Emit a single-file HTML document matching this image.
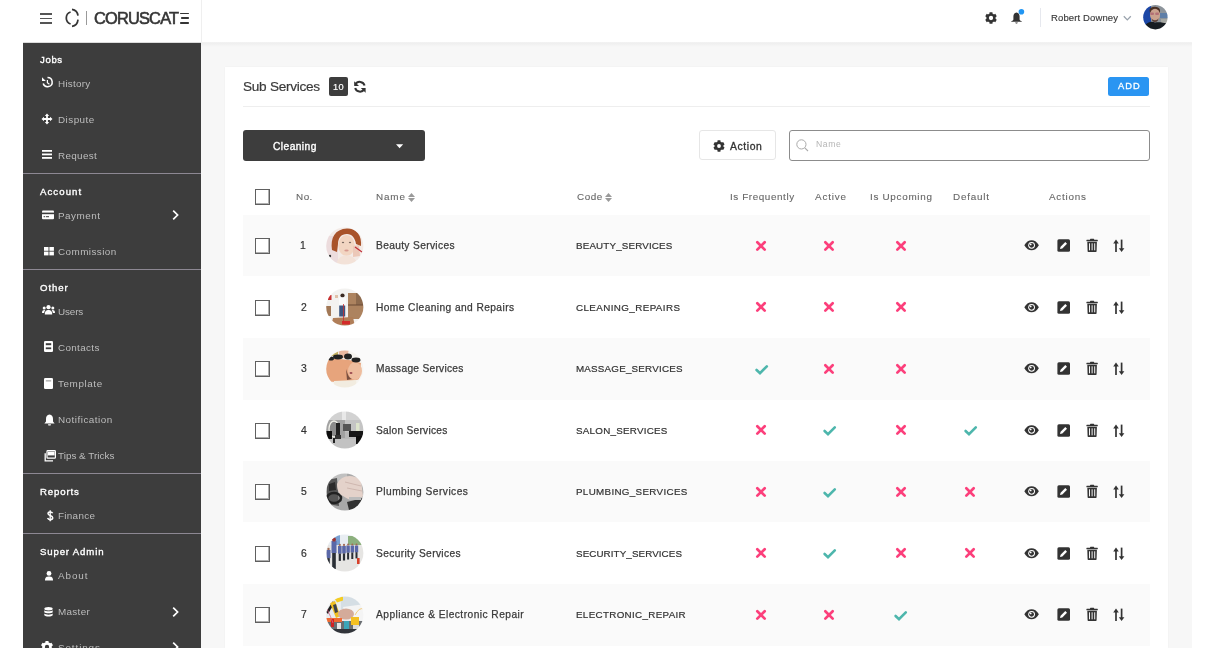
<!DOCTYPE html>
<html><head><meta charset="utf-8"><title>Sub Services</title>
<style>
html,body{margin:0;padding:0;}
body{width:1220px;height:648px;overflow:hidden;position:relative;background:#fff;font-family:"Liberation Sans",sans-serif;}
.t{position:absolute;white-space:nowrap;will-change:transform;}
svg{display:block;overflow:visible}
</style></head><body>
<div style="position:absolute;left:0px;top:0px;width:1220px;height:43px;background:#fff"></div>
<div style="position:absolute;left:201px;top:0px;width:1px;height:43px;background:#efefef"></div>
<div style="position:absolute;left:39.6px;top:13px;width:12.6px;height:1.5px;background:#555"></div>
<div style="position:absolute;left:39.6px;top:17.6px;width:12.6px;height:1.5px;background:#555"></div>
<div style="position:absolute;left:39.6px;top:22.2px;width:12.6px;height:1.5px;background:#555"></div>
<svg style="position:absolute;left:60px;top:4px" width="24" height="26" viewBox="0 0 24 26"><g fill="none" stroke="#353535" stroke-width="1.75"><path d="M10.6 8 C7.4 9 6.3 11.6 6.3 14 C6.3 16.4 7.4 19 10.6 20"/><path d="M12 5.3 C15.3 5.9 17.6 8 18 11.6"/><path d="M18 15.7 C17.6 19.5 15.3 22 12 22.4"/></g></svg>
<div style="position:absolute;left:86px;top:11.2px;width:1px;height:13.5px;background:#9a9a9a"></div>
<div class="t" style="left:93.80px;top:10.42px;font-size:16.4px;line-height:16.4px;letter-spacing:-0.814px;color:#353535;-webkit-text-stroke:0.6px #353535;">CORUSCAT</div>
<div style="position:absolute;left:180.4px;top:12.6px;width:8.3px;height:1.7px;background:#353535;border-radius:0.8px"></div>
<div style="position:absolute;left:180.6px;top:17.2px;width:8.0px;height:1.7px;background:#353535;border-radius:0.8px"></div>
<div style="position:absolute;left:180.4px;top:21.9px;width:8.3px;height:1.7px;background:#353535;border-radius:0.8px"></div>
<svg style="position:absolute;left:983px;top:10px" width="16" height="16" viewBox="0 0 16 16"><g transform="translate(8 8) scale(1.03)"><path fill="#333" fill-rule="evenodd" d="M-1.54 -4.23L-1.40 -5.63L1.40 -5.63L1.54 -4.23A4.5 4.5 0 0 1 2.89 -3.45L4.17 -4.03L5.58 -1.60L4.43 -0.78A4.5 4.5 0 0 1 4.43 0.78L5.58 1.60L4.17 4.03L2.89 3.45A4.5 4.5 0 0 1 1.54 4.23L1.40 5.63L-1.40 5.63L-1.54 4.23A4.5 4.5 0 0 1 -2.89 3.45L-4.17 4.03L-5.58 1.60L-4.43 0.78A4.5 4.5 0 0 1 -4.43 -0.78L-5.58 -1.60L-4.17 -4.03L-2.89 -3.45A4.5 4.5 0 0 1 -1.54 -4.23Z M2.1 0 A2.1 2.1 0 1 0 -2.1 0 A2.1 2.1 0 1 0 2.1 0Z"/></g></svg>
<svg style="position:absolute;left:1010px;top:8px" width="16" height="18" viewBox="0 0 16 18"><path fill="#333" d="M6.5 4.6 C4.4 4.8 3.4 6.6 3.4 8.6 L3.4 11.4 C3.4 12.2 2.4 12.6 1.2 13.2 L1.2 13.8 L11.8 13.8 L11.8 13.2 C10.6 12.6 9.6 12.2 9.6 11.4 L9.6 8.6 C9.6 6.6 8.6 4.8 6.5 4.6Z"/><path d="M5.2 14.4 L7.8 14.4 C7.6 15.2 7.1 15.4 6.5 15.4 C5.9 15.4 5.4 15.2 5.2 14.4Z" fill="#333"/><circle cx="11.4" cy="3.7" r="2.8" fill="#2196f3"/></svg>
<div style="position:absolute;left:1040px;top:8px;width:1px;height:19px;background:#e6e8ee"></div>
<div class="t" style="left:1051.40px;top:13.26px;font-size:9.5px;line-height:9.5px;letter-spacing:0.125px;color:#3a3a3a;-webkit-text-stroke:0.15px #3a3a3a;">Robert Downey</div>
<svg style="position:absolute;left:1123px;top:15px" width="9" height="7" viewBox="0 0 9 7"><path d="M0.8 1.2 L4.3 4.9 L7.8 1.2" fill="none" stroke="#9aa3ad" stroke-width="1.3"/></svg>
<svg style="position:absolute;left:1143px;top:4.8px" width="25" height="25" viewBox="0 0 25 25"><defs><clipPath id="av"><circle cx="12.4" cy="12.2" r="12.2"/></clipPath><filter id="avb"><feGaussianBlur stdDeviation="0.45"/></filter></defs><g clip-path="url(#av)"><g filter="url(#avb)"><rect x="-1" y="-1" width="27" height="27" fill="#8d949b"/><rect x="-1" y="-1" width="9" height="27" fill="#1b47a6"/><rect x="17" y="8" width="8" height="5" fill="#5f7fa8"/><rect x="18" y="14" width="7" height="4" fill="#a7a9a4"/><path d="M6.5 5 C7 1 16 0.5 17 5 L17 8 L7 8Z" fill="#4a3026"/><ellipse cx="12" cy="10" rx="5" ry="6.2" fill="#caa28e"/><rect x="7.2" y="7.6" width="3.8" height="2.4" rx="1.1" fill="#b37076"/><rect x="12.2" y="7.6" width="3.8" height="2.4" rx="1.1" fill="#b37076"/><path d="M8.5 13 C9.5 16 14.5 16 15.5 13 L15 15.5 C13 17.5 11 17.5 9 15.5Z" fill="#5a4038"/><path d="M-1 26 L2 20 C6 16.5 9 16 12 17.5 C15 17 19 17 26 19 L26 26Z" fill="#161b20"/></g></g></svg>
<div style="position:absolute;left:23px;top:42px;width:178px;height:1px;background:#dcdcdc"></div>
<div style="position:absolute;left:23px;top:43px;width:178px;height:605px;background:#3d3d3d"></div>
<div style="position:absolute;left:23px;top:173px;width:178px;height:1px;background:#8d8893"></div>
<div style="position:absolute;left:23px;top:269px;width:178px;height:1px;background:#8d8893"></div>
<div style="position:absolute;left:23px;top:473px;width:178px;height:1px;background:#8d8893"></div>
<div style="position:absolute;left:23px;top:533px;width:178px;height:1px;background:#8d8893"></div>
<div class="t" style="left:40.40px;top:55.17px;font-size:9.6px;line-height:9.6px;letter-spacing:0.633px;color:#ffffff;-webkit-text-stroke:0.35px #fff;">Jobs</div>
<div class="t" style="left:40.40px;top:187.17px;font-size:9.6px;line-height:9.6px;letter-spacing:1.083px;color:#ffffff;-webkit-text-stroke:0.35px #fff;">Account</div>
<div class="t" style="left:40.40px;top:283.17px;font-size:9.6px;line-height:9.6px;letter-spacing:0.950px;color:#ffffff;-webkit-text-stroke:0.35px #fff;">Other</div>
<div class="t" style="left:40.40px;top:487.17px;font-size:9.6px;line-height:9.6px;letter-spacing:0.867px;color:#ffffff;-webkit-text-stroke:0.35px #fff;">Reports</div>
<div class="t" style="left:40.40px;top:547.17px;font-size:9.6px;line-height:9.6px;letter-spacing:0.855px;color:#ffffff;-webkit-text-stroke:0.35px #fff;">Super Admin</div>
<div class="t" style="left:58.40px;top:78.92px;font-size:9.9px;line-height:9.9px;letter-spacing:0.250px;color:#bdbdbd;">History</div>
<div class="t" style="left:58.40px;top:114.92px;font-size:9.9px;line-height:9.9px;letter-spacing:0.458px;color:#bdbdbd;">Dispute</div>
<div class="t" style="left:58.40px;top:150.92px;font-size:9.9px;line-height:9.9px;letter-spacing:0.333px;color:#bdbdbd;">Request</div>
<div class="t" style="left:58.40px;top:210.92px;font-size:9.9px;line-height:9.9px;letter-spacing:0.492px;color:#bdbdbd;">Payment</div>
<div class="t" style="left:58.40px;top:246.92px;font-size:9.9px;line-height:9.9px;letter-spacing:0.439px;color:#bdbdbd;">Commission</div>
<div class="t" style="left:58.40px;top:306.92px;font-size:9.9px;line-height:9.9px;letter-spacing:-0.138px;color:#bdbdbd;">Users</div>
<div class="t" style="left:58.40px;top:342.92px;font-size:9.9px;line-height:9.9px;letter-spacing:0.336px;color:#bdbdbd;">Contacts</div>
<div class="t" style="left:58.40px;top:378.92px;font-size:9.9px;line-height:9.9px;letter-spacing:0.579px;color:#bdbdbd;">Template</div>
<div class="t" style="left:58.40px;top:414.92px;font-size:9.9px;line-height:9.9px;letter-spacing:0.486px;color:#bdbdbd;">Notification</div>
<div class="t" style="left:58.40px;top:450.92px;font-size:9.9px;line-height:9.9px;letter-spacing:0.017px;color:#bdbdbd;">Tips &amp; Tricks</div>
<div class="t" style="left:58.40px;top:510.92px;font-size:9.9px;line-height:9.9px;letter-spacing:0.300px;color:#bdbdbd;">Finance</div>
<div class="t" style="left:58.40px;top:570.92px;font-size:9.9px;line-height:9.9px;letter-spacing:0.912px;color:#bdbdbd;">About</div>
<div class="t" style="left:58.40px;top:606.92px;font-size:9.9px;line-height:9.9px;letter-spacing:0.310px;color:#bdbdbd;">Master</div>
<div class="t" style="left:58.40px;top:642.92px;font-size:9.9px;line-height:9.9px;letter-spacing:0.893px;color:#bdbdbd;">Settings</div>
<svg style="position:absolute;left:171px;top:209px" width="9" height="12" viewBox="0 0 9 12"><path d="M2.2 1.6 L6.6 6 L2.2 10.4" fill="none" stroke="#fff" stroke-width="1.7"/></svg>
<svg style="position:absolute;left:171px;top:605.5px" width="9" height="12" viewBox="0 0 9 12"><path d="M2.2 1.6 L6.6 6 L2.2 10.4" fill="none" stroke="#fff" stroke-width="1.7"/></svg>
<svg style="position:absolute;left:171px;top:641px" width="9" height="12" viewBox="0 0 9 12"><path d="M2.2 1.6 L6.6 6 L2.2 10.4" fill="none" stroke="#fff" stroke-width="1.7"/></svg>
<svg style="position:absolute;left:41px;top:76px" width="12" height="12" viewBox="0 0 12 12"><path d="M6.5 1.5 A4.6 4.6 0 1 1 2.2 7.5" fill="none" stroke="#fff" stroke-width="1.5"/><path d="M1 1.2 L1 5 L4.8 5Z" fill="#fff"/><path d="M6.4 4 L6.4 6.8 L8.4 8.2" fill="none" stroke="#fff" stroke-width="1.2"/></svg>
<svg style="position:absolute;left:41px;top:113px" width="12" height="12" viewBox="0 0 12 12"><path fill="#fff" d="M6 0.5 L8.2 3 L6.9 3 L6.9 5.1 L9 5.1 L9 3.8 L11.5 6 L9 8.2 L9 6.9 L6.9 6.9 L6.9 9 L8.2 9 L6 11.5 L3.8 9 L5.1 9 L5.1 6.9 L3 6.9 L3 8.2 L0.5 6 L3 3.8 L3 5.1 L5.1 5.1 L5.1 3 L3.8 3Z"/></svg>
<svg style="position:absolute;left:42px;top:150px" width="11" height="9" viewBox="0 0 11 9"><rect x="0" y="0" width="10" height="1.8" fill="#fff"/><rect x="0" y="3.5" width="10" height="1.8" fill="#fff"/><rect x="0" y="7" width="10" height="1.8" fill="#fff"/></svg>
<svg style="position:absolute;left:42px;top:210px" width="12" height="10" viewBox="0 0 12 10"><rect x="0" y="0.5" width="12" height="8.8" rx="1" fill="#fff"/><rect x="0" y="2.6" width="12" height="1.6" fill="#3d3d3d"/><rect x="1.6" y="6.2" width="1.6" height="1" fill="#3d3d3d"/><rect x="4" y="6.2" width="3" height="1" fill="#3d3d3d"/></svg>
<svg style="position:absolute;left:43.5px;top:247px" width="11" height="9" viewBox="0 0 11 9"><rect x="0" y="0" width="4.5" height="3.8" fill="#fff"/><rect x="5.4" y="0" width="4.5" height="3.8" fill="#fff"/><rect x="0" y="4.6" width="4.5" height="3.8" fill="#fff"/><rect x="5.4" y="4.6" width="4.5" height="3.8" fill="#fff"/></svg>
<svg style="position:absolute;left:42px;top:305px" width="13" height="10" viewBox="0 0 13 10"><circle cx="6.5" cy="2.2" r="2.1" fill="#fff"/><path d="M2.8 9.5 C2.8 6 4.4 5 6.5 5 C8.6 5 10.2 6 10.2 9.5Z" fill="#fff"/><circle cx="2.2" cy="3" r="1.5" fill="#fff"/><circle cx="10.8" cy="3" r="1.5" fill="#fff"/><path d="M0 8 C0 5.6 1 5 2.5 5 L3.3 5.2 C2.5 6 2.2 7 2.2 8Z" fill="#fff"/><path d="M13 8 C13 5.6 12 5 10.5 5 L9.7 5.2 C10.5 6 10.8 7 10.8 8Z" fill="#fff"/></svg>
<svg style="position:absolute;left:44px;top:341px" width="9" height="11" viewBox="0 0 9 11"><rect x="0" y="0" width="9" height="11" rx="1.3" fill="#fff"/><rect x="1.8" y="2.2" width="5.4" height="2" fill="#3d3d3d"/><rect x="1.8" y="6.4" width="5.4" height="1.8" fill="#3d3d3d"/></svg>
<svg style="position:absolute;left:44px;top:377.5px" width="9" height="11" viewBox="0 0 9 11"><rect x="0" y="0" width="9" height="11" rx="1.3" fill="#fff"/><rect x="1.8" y="2.2" width="5.4" height="1.3" fill="#aaa"/></svg>
<svg style="position:absolute;left:43.5px;top:413.5px" width="11" height="12" viewBox="0 0 11 12"><path fill="#fff" d="M5.5 0.6 C3 0.9 2 2.8 2 5 L2 7.4 L0.4 9.4 L10.6 9.4 L9 7.4 L9 5 C9 2.8 8 0.9 5.5 0.6Z"/><path d="M4 10.2 L7 10.2 L6.6 11.4 L4.4 11.4Z" fill="#fff"/></svg>
<svg style="position:absolute;left:43.5px;top:449.5px" width="12" height="12" viewBox="0 0 12 12"><rect x="3" y="0.6" width="8.4" height="7.6" rx="0.8" fill="none" stroke="#fff" stroke-width="1.2"/><rect x="3.8" y="1.6" width="6.8" height="3.8" fill="#fff"/><path d="M1.2 3.2 L1.2 10.8 L9 10.8" fill="none" stroke="#fff" stroke-width="1.3"/></svg>
<svg style="position:absolute;left:47px;top:510px" width="7" height="12" viewBox="0 0 7 12"><path d="M5.6 3.2 C5.2 2.2 4.4 1.9 3.2 1.9 C1.9 1.9 1 2.5 1 3.6 C1 4.7 1.9 5.1 3.2 5.5 C4.6 5.9 5.7 6.4 5.7 7.8 C5.7 9.1 4.6 9.7 3.2 9.7 C1.9 9.7 1 9.2 0.6 8.1" fill="none" stroke="#fff" stroke-width="1.5"/><path d="M3.2 0.3 V11.3" stroke="#fff" stroke-width="1.3"/></svg>
<svg style="position:absolute;left:44.5px;top:570.5px" width="8" height="10" viewBox="0 0 8 10"><circle cx="4" cy="2.4" r="2.4" fill="#fff"/><path d="M0 9.6 C0 6.2 1.6 5.6 4 5.6 C6.4 5.6 8 6.2 8 9.6Z" fill="#fff"/></svg>
<svg style="position:absolute;left:44px;top:607px" width="9" height="10" viewBox="0 0 9 10"><ellipse cx="4.5" cy="1.8" rx="4.2" ry="1.7" fill="#fff"/><path d="M0.3 3.2 C1.5 4.6 7.5 4.6 8.7 3.2 L8.7 5.2 C7.5 6.6 1.5 6.6 0.3 5.2Z" fill="#fff"/><path d="M0.3 6.6 C1.5 8 7.5 8 8.7 6.6 L8.7 8.2 C7.5 10 1.5 10 0.3 8.2Z" fill="#fff"/></svg>
<svg style="position:absolute;left:39px;top:638.6px" width="16" height="16" viewBox="0 0 16 16"><g transform="translate(8 8) scale(1.07)"><path fill="#fff" fill-rule="evenodd" d="M-1.54 -4.23L-1.40 -5.63L1.40 -5.63L1.54 -4.23A4.5 4.5 0 0 1 2.89 -3.45L4.17 -4.03L5.58 -1.60L4.43 -0.78A4.5 4.5 0 0 1 4.43 0.78L5.58 1.60L4.17 4.03L2.89 3.45A4.5 4.5 0 0 1 1.54 4.23L1.40 5.63L-1.40 5.63L-1.54 4.23A4.5 4.5 0 0 1 -2.89 3.45L-4.17 4.03L-5.58 1.60L-4.43 0.78A4.5 4.5 0 0 1 -4.43 -0.78L-5.58 -1.60L-4.17 -4.03L-2.89 -3.45A4.5 4.5 0 0 1 -1.54 -4.23Z M2 0 A2 2 0 1 0 -2 0 A2 2 0 1 0 2 0Z"/></g></svg>
<div style="position:absolute;left:201px;top:43px;width:991px;height:605px;background:#f7f7f7"></div>
<div style="position:absolute;left:201px;top:42px;width:991px;height:5px;background:linear-gradient(#f3f3f3,#efefef 25%,#f7f7f7)"></div>
<div style="position:absolute;left:225px;top:67px;width:943px;height:581px;background:#fff;box-shadow:0 0 1.5px rgba(0,0,0,0.05)"></div>
<div class="t" style="left:243.10px;top:79.79px;font-size:13.6px;line-height:13.6px;letter-spacing:-0.268px;color:#3a3a3a;-webkit-text-stroke:0.2px #3a3a3a;">Sub Services</div>
<div style="position:absolute;left:329px;top:77px;width:19px;height:19px;background:#3d3d3d;border-radius:2px"></div>
<div class="t" style="left:333.20px;top:82.51px;font-size:9.2px;line-height:9.2px;letter-spacing:0.350px;color:#fff;-webkit-text-stroke:0.2px #fff;">10</div>
<svg style="position:absolute;left:353px;top:80px" width="14" height="14" viewBox="0 0 14 14"><path d="M11.6 5.6 A5 5 0 0 0 2.4 4.4" fill="none" stroke="#333" stroke-width="2"/><path d="M1.2 1.2 L1.2 6 L6 6Z" fill="#333"/><path d="M2.2 8 A5 5 0 0 0 11.2 9.4" fill="none" stroke="#333" stroke-width="2"/><path d="M12.6 12.8 L12.6 8 L7.8 8Z" fill="#333"/></svg>
<div style="position:absolute;left:1107.5px;top:77px;width:41.7px;height:19px;background:#2a95f2;border-radius:2.5px"></div>
<div class="t" style="left:1117.50px;top:82.43px;font-size:9.3px;line-height:9.3px;letter-spacing:1.075px;color:#fff;-webkit-text-stroke:0.3px #fff;">ADD</div>
<div style="position:absolute;left:243px;top:106px;width:907px;height:1px;background:#eeeeee"></div>
<div style="position:absolute;left:243px;top:130px;width:182px;height:31px;background:#3d3d3d;border-radius:3px"></div>
<div class="t" style="left:273.40px;top:141.67px;font-size:10.2px;line-height:10.2px;letter-spacing:0.450px;color:#fff;-webkit-text-stroke:0.35px #fff;">Cleaning</div>
<svg style="position:absolute;left:396px;top:144px" width="8" height="5" viewBox="0 0 8 5"><path d="M0 0.2 L7.2 0.2 L3.6 4.2Z" fill="#fff"/></svg>
<div style="position:absolute;left:699px;top:130px;width:77px;height:30px;background:#fff;border:1px solid #e6e6e6;border-radius:3px;box-sizing:border-box"></div>
<svg style="position:absolute;left:710.5px;top:138px" width="16" height="16" viewBox="0 0 16 16"><g transform="translate(8 8) scale(1.0)"><path fill="#333" fill-rule="evenodd" d="M-1.54 -4.23L-1.40 -5.63L1.40 -5.63L1.54 -4.23A4.5 4.5 0 0 1 2.89 -3.45L4.17 -4.03L5.58 -1.60L4.43 -0.78A4.5 4.5 0 0 1 4.43 0.78L5.58 1.60L4.17 4.03L2.89 3.45A4.5 4.5 0 0 1 1.54 4.23L1.40 5.63L-1.40 5.63L-1.54 4.23A4.5 4.5 0 0 1 -2.89 3.45L-4.17 4.03L-5.58 1.60L-4.43 0.78A4.5 4.5 0 0 1 -4.43 -0.78L-5.58 -1.60L-4.17 -4.03L-2.89 -3.45A4.5 4.5 0 0 1 -1.54 -4.23Z M1.9 0 A1.9 1.9 0 1 0 -1.9 0 A1.9 1.9 0 1 0 1.9 0Z"/></g></svg>
<div class="t" style="left:729.80px;top:141.50px;font-size:10.4px;line-height:10.4px;letter-spacing:0.580px;color:#333;-webkit-text-stroke:0.3px #333;">Action</div>
<div style="position:absolute;left:789px;top:130px;width:361px;height:31px;background:#fff;border:1px solid #8c8c8c;border-radius:3px;box-sizing:border-box"></div>
<svg style="position:absolute;left:796px;top:139px" width="13" height="13" viewBox="0 0 13 13"><circle cx="5.4" cy="5.4" r="4.6" fill="none" stroke="#aaa" stroke-width="1"/><path d="M8.8 8.8 L12 12" stroke="#aaa" stroke-width="1.1"/></svg>
<div class="t" style="left:815.70px;top:140.02px;font-size:8.6px;line-height:8.6px;letter-spacing:0.617px;color:#b5b5b5;">Name</div>
<div style="position:absolute;left:255px;top:189px;width:15px;height:16px;background:#fff;border:1px solid #606060;box-shadow:inset -1px -1px 0 #b0b0b0;box-sizing:border-box"></div>
<div class="t" style="left:295.70px;top:191.92px;font-size:9.9px;line-height:9.9px;letter-spacing:0.500px;color:#666;-webkit-text-stroke:0.1px #666;">No.</div>
<div class="t" style="left:376.00px;top:191.92px;font-size:9.9px;line-height:9.9px;letter-spacing:0.867px;color:#666;-webkit-text-stroke:0.1px #666;">Name</div>
<div class="t" style="left:576.50px;top:191.92px;font-size:9.9px;line-height:9.9px;letter-spacing:0.550px;color:#666;-webkit-text-stroke:0.1px #666;">Code</div>
<svg style="position:absolute;left:408px;top:193px" width="8" height="9" viewBox="0 0 8 9"><path d="M0 4 L3.5 0 L7 4Z" fill="#9a9a9a"/><path d="M0 4.9 L3.5 8.9 L7 4.9Z" fill="#9a9a9a"/></svg>
<svg style="position:absolute;left:604.6px;top:193px" width="8" height="9" viewBox="0 0 8 9"><path d="M0 4 L3.5 0 L7 4Z" fill="#9a9a9a"/><path d="M0 4.9 L3.5 8.9 L7 4.9Z" fill="#9a9a9a"/></svg>
<div class="t" style="left:730.30px;top:191.92px;font-size:9.9px;line-height:9.9px;letter-spacing:0.587px;color:#666;-webkit-text-stroke:0.1px #666;">Is Frequently</div>
<div class="t" style="left:815.20px;top:191.92px;font-size:9.9px;line-height:9.9px;letter-spacing:0.810px;color:#666;-webkit-text-stroke:0.1px #666;">Active</div>
<div class="t" style="left:869.60px;top:191.92px;font-size:9.9px;line-height:9.9px;letter-spacing:0.700px;color:#666;-webkit-text-stroke:0.1px #666;">Is Upcoming</div>
<div class="t" style="left:952.50px;top:191.92px;font-size:9.9px;line-height:9.9px;letter-spacing:0.775px;color:#666;-webkit-text-stroke:0.1px #666;">Default</div>
<div class="t" style="left:1049.40px;top:191.92px;font-size:9.9px;line-height:9.9px;letter-spacing:0.758px;color:#666;-webkit-text-stroke:0.1px #666;">Actions</div>
<div style="position:absolute;left:243px;top:215px;width:907px;height:61px;background:#fafafa"></div>
<div style="position:absolute;left:255px;top:238px;width:15px;height:16px;background:#fff;border:1px solid #606060;box-shadow:inset -1px -1px 0 #b0b0b0;box-sizing:border-box"></div>
<div class="t" style="left:300.40px;top:240.50px;font-size:10.4px;line-height:10.4px;letter-spacing:0.000px;color:#333;-webkit-text-stroke:0.2px #333;">1</div>
<svg style="position:absolute;left:325.0px;top:225.75px" width="40" height="40" viewBox="0 0 40 40"><defs><clipPath id="c0"><circle cx="19.8" cy="20" r="18.6"/></clipPath><filter id="bl0" x="-10%" y="-10%" width="120%" height="120%"><feGaussianBlur stdDeviation="0.55"/></filter></defs><g clip-path="url(#c0)"><g filter="url(#bl0)"><rect width="40" height="40" fill="#f3eae6"/><rect x="0" y="10" width="13" height="28" fill="#ecdcdd"/><path d="M7 24 C5 12 10 3 22 2.5 C32 2.5 37 10 36 20 L31 18 C30 12 27 8 22 8 C16 8 13 12 13 18 L12 26Z" fill="#a9532c"/><ellipse cx="21.5" cy="19.5" rx="8.2" ry="10.5" fill="#f2d5c2"/><path d="M11 40 C12 32 16 29.5 21.5 29.5 C27 29.5 31 32 33 40Z" fill="#f3e2d8"/><path d="M28 20 L34 19 L35 30 L28 31Z" fill="#ecc8b8"/><path d="M30 21 L37 26" stroke="#c0303a" stroke-width="1.2"/><circle cx="5" cy="30" r="1.2" fill="#333"/><ellipse cx="18" cy="16.5" rx="1.2" ry=".7" fill="#7a6a60"/><ellipse cx="25" cy="16.5" rx="1.2" ry=".7" fill="#7a6a60"/><ellipse cx="21.5" cy="24.5" rx="2.2" ry="1" fill="#d89a90"/></g></g></svg>
<div class="t" style="left:376.00px;top:240.67px;font-size:10.2px;line-height:10.2px;letter-spacing:0.350px;color:#3a3a3a;-webkit-text-stroke:0.25px #3a3a3a;">Beauty Services</div>
<div class="t" style="left:576.00px;top:241.00px;font-size:9.8px;line-height:9.8px;letter-spacing:0.161px;color:#333;-webkit-text-stroke:0.2px #333;">BEAUTY_SERVICES</div>
<svg style="position:absolute;left:755px;top:239.75px" width="12" height="12" viewBox="0 0 12 12"><path d="M2.3 2.2 L9.7 9.6 M9.7 2.2 L2.3 9.6" stroke="#fc3f7b" stroke-width="2.7" stroke-linecap="round"/></svg>
<svg style="position:absolute;left:823px;top:239.75px" width="12" height="12" viewBox="0 0 12 12"><path d="M2.3 2.2 L9.7 9.6 M9.7 2.2 L2.3 9.6" stroke="#fc3f7b" stroke-width="2.7" stroke-linecap="round"/></svg>
<svg style="position:absolute;left:894.6px;top:239.75px" width="12" height="12" viewBox="0 0 12 12"><path d="M2.3 2.2 L9.7 9.6 M9.7 2.2 L2.3 9.6" stroke="#fc3f7b" stroke-width="2.7" stroke-linecap="round"/></svg>
<svg style="position:absolute;left:1024.3px;top:240px" width="16" height="11" viewBox="0 0 16 11"><path d="M0.3 5.3 C2.4 1.6 5 0.3 7.6 0.3 C10.2 0.3 12.8 1.6 14.9 5.3 C12.8 9 10.2 10.3 7.6 10.3 C5 10.3 2.4 9 0.3 5.3Z" fill="#333"/><circle cx="7.6" cy="5.3" r="3.4" fill="#fff"/><circle cx="7.6" cy="5.3" r="2.4" fill="#333"/><circle cx="6.7" cy="4.4" r=".9" fill="#fff"/></svg>
<svg style="position:absolute;left:1057px;top:239px" width="14" height="14" viewBox="0 0 14 14"><rect x="0.4" y="0.3" width="12.6" height="12.4" rx="1.5" fill="#333"/><path d="M3 10 L3.6 7.7 L8.3 3 L10 4.7 L5.3 9.4Z" fill="#fff"/></svg>
<svg style="position:absolute;left:1086px;top:238px" width="13" height="15" viewBox="0 0 13 15"><rect x="0.4" y="1.7" width="11.4" height="1.5" rx=".5" fill="#333"/><rect x="4" y="0.8" width="4.2" height="1.4" rx=".6" fill="#333"/><path d="M1.3 3.8 L10.9 3.8 L10.6 13.3 C10.6 13.7 10.3 14 9.9 14 L2.3 14 C1.9 14 1.6 13.7 1.6 13.3Z" fill="#333"/><rect x="3" y="5.3" width="1" height="7" fill="#fff" opacity=".95"/><rect x="5.6" y="5.3" width="1" height="7" fill="#fff" opacity=".95"/><rect x="8.2" y="5.3" width="1" height="7" fill="#fff" opacity=".95"/></svg>
<svg style="position:absolute;left:1113px;top:239px" width="12" height="14" viewBox="0 0 12 14"><path d="M3 13 L3 3" stroke="#333" stroke-width="1.7"/><path d="M0.2 4.4 L3 0.4 L5.8 4.4Z" fill="#333"/><path d="M8.6 0.6 L8.6 10.4" stroke="#333" stroke-width="1.7"/><path d="M5.8 9.2 L8.6 13.1 L11.4 9.2Z" fill="#333"/></svg>
<div style="position:absolute;left:255px;top:300px;width:15px;height:16px;background:#fff;border:1px solid #606060;box-shadow:inset -1px -1px 0 #b0b0b0;box-sizing:border-box"></div>
<div class="t" style="left:300.80px;top:302.50px;font-size:10.4px;line-height:10.4px;letter-spacing:0.000px;color:#333;-webkit-text-stroke:0.2px #333;">2</div>
<svg style="position:absolute;left:325.0px;top:287.25px" width="40" height="40" viewBox="0 0 40 40"><defs><clipPath id="c1"><circle cx="19.8" cy="20" r="18.6"/></clipPath><filter id="bl1" x="-10%" y="-10%" width="120%" height="120%"><feGaussianBlur stdDeviation="0.55"/></filter></defs><g clip-path="url(#c1)"><g filter="url(#bl1)"><rect width="40" height="40" fill="#f3f2f0"/><rect x="23" y="6" width="16" height="26" fill="#ad835f"/><rect x="31" y="6" width="8" height="12" fill="#8d6a4e"/><rect x="23" y="17.5" width="16" height="1" fill="#6a4a36"/><rect x="1" y="19" width="5" height="10" fill="#a27857"/><path d="M8 31 L28 30 L30 40 L6 40Z" fill="#b07e58"/><circle cx="17.5" cy="8.5" r="2.1" fill="#3a2a22"/><rect x="14" y="10.5" width="7" height="8.5" fill="#fafafa"/><rect x="14.2" y="18.5" width="6" height="11" fill="#3d5680"/><rect x="17" y="34" width="8" height="3.5" fill="#d32a2a"/><rect x="18" y="17" width="0.8" height="17" fill="#c83030"/><rect x="3" y="8" width="3.5" height="5" fill="#c83030"/><rect x="10" y="8" width="3" height="3" fill="#e0c0a8"/></g></g></svg>
<div class="t" style="left:376.00px;top:302.67px;font-size:10.2px;line-height:10.2px;letter-spacing:0.419px;color:#3a3a3a;-webkit-text-stroke:0.25px #3a3a3a;">Home Cleaning and Repairs</div>
<div class="t" style="left:576.00px;top:303.00px;font-size:9.8px;line-height:9.8px;letter-spacing:0.410px;color:#333;-webkit-text-stroke:0.2px #333;">CLEANING_REPAIRS</div>
<svg style="position:absolute;left:755px;top:301.25px" width="12" height="12" viewBox="0 0 12 12"><path d="M2.3 2.2 L9.7 9.6 M9.7 2.2 L2.3 9.6" stroke="#fc3f7b" stroke-width="2.7" stroke-linecap="round"/></svg>
<svg style="position:absolute;left:823px;top:301.25px" width="12" height="12" viewBox="0 0 12 12"><path d="M2.3 2.2 L9.7 9.6 M9.7 2.2 L2.3 9.6" stroke="#fc3f7b" stroke-width="2.7" stroke-linecap="round"/></svg>
<svg style="position:absolute;left:894.6px;top:301.25px" width="12" height="12" viewBox="0 0 12 12"><path d="M2.3 2.2 L9.7 9.6 M9.7 2.2 L2.3 9.6" stroke="#fc3f7b" stroke-width="2.7" stroke-linecap="round"/></svg>
<svg style="position:absolute;left:1024.3px;top:302px" width="16" height="11" viewBox="0 0 16 11"><path d="M0.3 5.3 C2.4 1.6 5 0.3 7.6 0.3 C10.2 0.3 12.8 1.6 14.9 5.3 C12.8 9 10.2 10.3 7.6 10.3 C5 10.3 2.4 9 0.3 5.3Z" fill="#333"/><circle cx="7.6" cy="5.3" r="3.4" fill="#fff"/><circle cx="7.6" cy="5.3" r="2.4" fill="#333"/><circle cx="6.7" cy="4.4" r=".9" fill="#fff"/></svg>
<svg style="position:absolute;left:1057px;top:301px" width="14" height="14" viewBox="0 0 14 14"><rect x="0.4" y="0.3" width="12.6" height="12.4" rx="1.5" fill="#333"/><path d="M3 10 L3.6 7.7 L8.3 3 L10 4.7 L5.3 9.4Z" fill="#fff"/></svg>
<svg style="position:absolute;left:1086px;top:300px" width="13" height="15" viewBox="0 0 13 15"><rect x="0.4" y="1.7" width="11.4" height="1.5" rx=".5" fill="#333"/><rect x="4" y="0.8" width="4.2" height="1.4" rx=".6" fill="#333"/><path d="M1.3 3.8 L10.9 3.8 L10.6 13.3 C10.6 13.7 10.3 14 9.9 14 L2.3 14 C1.9 14 1.6 13.7 1.6 13.3Z" fill="#333"/><rect x="3" y="5.3" width="1" height="7" fill="#fff" opacity=".95"/><rect x="5.6" y="5.3" width="1" height="7" fill="#fff" opacity=".95"/><rect x="8.2" y="5.3" width="1" height="7" fill="#fff" opacity=".95"/></svg>
<svg style="position:absolute;left:1113px;top:301px" width="12" height="14" viewBox="0 0 12 14"><path d="M3 13 L3 3" stroke="#333" stroke-width="1.7"/><path d="M0.2 4.4 L3 0.4 L5.8 4.4Z" fill="#333"/><path d="M8.6 0.6 L8.6 10.4" stroke="#333" stroke-width="1.7"/><path d="M5.8 9.2 L8.6 13.1 L11.4 9.2Z" fill="#333"/></svg>
<div style="position:absolute;left:243px;top:338px;width:907px;height:62px;background:#fafafa"></div>
<div style="position:absolute;left:255px;top:361px;width:15px;height:16px;background:#fff;border:1px solid #606060;box-shadow:inset -1px -1px 0 #b0b0b0;box-sizing:border-box"></div>
<div class="t" style="left:300.80px;top:363.50px;font-size:10.4px;line-height:10.4px;letter-spacing:0.000px;color:#333;-webkit-text-stroke:0.2px #333;">3</div>
<svg style="position:absolute;left:325.0px;top:348.75px" width="40" height="40" viewBox="0 0 40 40"><defs><clipPath id="c2"><circle cx="19.8" cy="20" r="18.6"/></clipPath><filter id="bl2" x="-10%" y="-10%" width="120%" height="120%"><feGaussianBlur stdDeviation="0.55"/></filter></defs><g clip-path="url(#c2)"><g filter="url(#bl2)"><rect width="40" height="40" fill="#f6f4f0"/><rect x="6" y="2" width="7" height="5" fill="#c4b060"/><path d="M0 11 C10 9 25 10 36 14 L34 30 C28 33 15 34 0 32Z" fill="#e7a47c"/><ellipse cx="30" cy="22" rx="7" ry="9" fill="#eebd9e"/><path d="M21 20 C23 26 24 29 27 30 L22 31Z" fill="#7a5040"/><ellipse cx="26" cy="24" rx="1.5" ry="1" fill="#9a4a50"/><path d="M13 0 L24 0 L22 9 L15 9Z" fill="#e8b8a0"/><ellipse cx="6" cy="9.5" rx="3" ry="2" fill="#222"/><ellipse cx="13" cy="8" rx="5" ry="2.4" fill="#222"/><ellipse cx="23" cy="7.5" rx="4" ry="3" fill="#222"/><ellipse cx="31" cy="11" rx="4.5" ry="2.4" fill="#222"/><path d="M9 32 L31 31 L32 40 L9 40Z" fill="#f2ece0"/></g></g></svg>
<div class="t" style="left:376.00px;top:363.67px;font-size:10.2px;line-height:10.2px;letter-spacing:0.277px;color:#3a3a3a;-webkit-text-stroke:0.25px #3a3a3a;">Massage Services</div>
<div class="t" style="left:576.00px;top:364.00px;font-size:9.8px;line-height:9.8px;letter-spacing:0.213px;color:#333;-webkit-text-stroke:0.2px #333;">MASSAGE_SERVICES</div>
<svg style="position:absolute;left:754.8px;top:363.95px" width="14" height="12" viewBox="0 0 14 12"><path d="M1.6 6 L5 9.2 L11.8 2.4" fill="none" stroke="#4db6ac" stroke-width="2.6" stroke-linecap="round"/></svg>
<svg style="position:absolute;left:823px;top:362.75px" width="12" height="12" viewBox="0 0 12 12"><path d="M2.3 2.2 L9.7 9.6 M9.7 2.2 L2.3 9.6" stroke="#fc3f7b" stroke-width="2.7" stroke-linecap="round"/></svg>
<svg style="position:absolute;left:894.6px;top:362.75px" width="12" height="12" viewBox="0 0 12 12"><path d="M2.3 2.2 L9.7 9.6 M9.7 2.2 L2.3 9.6" stroke="#fc3f7b" stroke-width="2.7" stroke-linecap="round"/></svg>
<svg style="position:absolute;left:1024.3px;top:363px" width="16" height="11" viewBox="0 0 16 11"><path d="M0.3 5.3 C2.4 1.6 5 0.3 7.6 0.3 C10.2 0.3 12.8 1.6 14.9 5.3 C12.8 9 10.2 10.3 7.6 10.3 C5 10.3 2.4 9 0.3 5.3Z" fill="#333"/><circle cx="7.6" cy="5.3" r="3.4" fill="#fff"/><circle cx="7.6" cy="5.3" r="2.4" fill="#333"/><circle cx="6.7" cy="4.4" r=".9" fill="#fff"/></svg>
<svg style="position:absolute;left:1057px;top:362px" width="14" height="14" viewBox="0 0 14 14"><rect x="0.4" y="0.3" width="12.6" height="12.4" rx="1.5" fill="#333"/><path d="M3 10 L3.6 7.7 L8.3 3 L10 4.7 L5.3 9.4Z" fill="#fff"/></svg>
<svg style="position:absolute;left:1086px;top:361px" width="13" height="15" viewBox="0 0 13 15"><rect x="0.4" y="1.7" width="11.4" height="1.5" rx=".5" fill="#333"/><rect x="4" y="0.8" width="4.2" height="1.4" rx=".6" fill="#333"/><path d="M1.3 3.8 L10.9 3.8 L10.6 13.3 C10.6 13.7 10.3 14 9.9 14 L2.3 14 C1.9 14 1.6 13.7 1.6 13.3Z" fill="#333"/><rect x="3" y="5.3" width="1" height="7" fill="#fff" opacity=".95"/><rect x="5.6" y="5.3" width="1" height="7" fill="#fff" opacity=".95"/><rect x="8.2" y="5.3" width="1" height="7" fill="#fff" opacity=".95"/></svg>
<svg style="position:absolute;left:1113px;top:362px" width="12" height="14" viewBox="0 0 12 14"><path d="M3 13 L3 3" stroke="#333" stroke-width="1.7"/><path d="M0.2 4.4 L3 0.4 L5.8 4.4Z" fill="#333"/><path d="M8.6 0.6 L8.6 10.4" stroke="#333" stroke-width="1.7"/><path d="M5.8 9.2 L8.6 13.1 L11.4 9.2Z" fill="#333"/></svg>
<div style="position:absolute;left:255px;top:423px;width:15px;height:16px;background:#fff;border:1px solid #606060;box-shadow:inset -1px -1px 0 #b0b0b0;box-sizing:border-box"></div>
<div class="t" style="left:300.80px;top:425.50px;font-size:10.4px;line-height:10.4px;letter-spacing:0.000px;color:#333;-webkit-text-stroke:0.2px #333;">4</div>
<svg style="position:absolute;left:325.0px;top:410.25px" width="40" height="40" viewBox="0 0 40 40"><defs><clipPath id="c3"><circle cx="19.8" cy="20" r="18.6"/></clipPath><filter id="bl3" x="-10%" y="-10%" width="120%" height="120%"><feGaussianBlur stdDeviation="0.55"/></filter></defs><g clip-path="url(#c3)"><g filter="url(#bl3)"><rect width="40" height="40" fill="#b9b9b9"/><rect x="0" y="0" width="40" height="10" fill="#d2d2d2"/><rect x="17" y="0" width="4" height="12" fill="#e8e8e8"/><rect x="0" y="10" width="20" height="18" fill="#a2a2a2"/><rect x="20" y="10" width="20" height="12" fill="#c4c4c4"/><ellipse cx="9" cy="19" rx="5" ry="8" fill="#8c8c8c" stroke="#efefe8" stroke-width="1.3"/><rect x="11" y="13" width="4" height="12" fill="#222"/><rect x="1" y="21" width="6" height="12" fill="#101010"/><rect x="10" y="25" width="6" height="5" fill="#333"/><rect x="18" y="14" width="8" height="7" fill="#555"/><rect x="24" y="21" width="14" height="6" fill="#141414"/><rect x="31" y="13" width="3.5" height="8" fill="#dde4cc"/><rect x="0" y="29" width="40" height="11" fill="#c2c2c2"/><rect x="31" y="26" width="6" height="8" fill="#0e0e0e"/><rect x="8" y="28" width="2" height="5" fill="#222"/></g></g></svg>
<div class="t" style="left:376.00px;top:425.67px;font-size:10.2px;line-height:10.2px;letter-spacing:0.265px;color:#3a3a3a;-webkit-text-stroke:0.25px #3a3a3a;">Salon Services</div>
<div class="t" style="left:576.00px;top:426.00px;font-size:9.8px;line-height:9.8px;letter-spacing:0.250px;color:#333;-webkit-text-stroke:0.2px #333;">SALON_SERVICES</div>
<svg style="position:absolute;left:755px;top:424.25px" width="12" height="12" viewBox="0 0 12 12"><path d="M2.3 2.2 L9.7 9.6 M9.7 2.2 L2.3 9.6" stroke="#fc3f7b" stroke-width="2.7" stroke-linecap="round"/></svg>
<svg style="position:absolute;left:822.8px;top:425.45px" width="14" height="12" viewBox="0 0 14 12"><path d="M1.6 6 L5 9.2 L11.8 2.4" fill="none" stroke="#4db6ac" stroke-width="2.6" stroke-linecap="round"/></svg>
<svg style="position:absolute;left:894.6px;top:424.25px" width="12" height="12" viewBox="0 0 12 12"><path d="M2.3 2.2 L9.7 9.6 M9.7 2.2 L2.3 9.6" stroke="#fc3f7b" stroke-width="2.7" stroke-linecap="round"/></svg>
<svg style="position:absolute;left:963.8px;top:425.45px" width="14" height="12" viewBox="0 0 14 12"><path d="M1.6 6 L5 9.2 L11.8 2.4" fill="none" stroke="#4db6ac" stroke-width="2.6" stroke-linecap="round"/></svg>
<svg style="position:absolute;left:1024.3px;top:425px" width="16" height="11" viewBox="0 0 16 11"><path d="M0.3 5.3 C2.4 1.6 5 0.3 7.6 0.3 C10.2 0.3 12.8 1.6 14.9 5.3 C12.8 9 10.2 10.3 7.6 10.3 C5 10.3 2.4 9 0.3 5.3Z" fill="#333"/><circle cx="7.6" cy="5.3" r="3.4" fill="#fff"/><circle cx="7.6" cy="5.3" r="2.4" fill="#333"/><circle cx="6.7" cy="4.4" r=".9" fill="#fff"/></svg>
<svg style="position:absolute;left:1057px;top:424px" width="14" height="14" viewBox="0 0 14 14"><rect x="0.4" y="0.3" width="12.6" height="12.4" rx="1.5" fill="#333"/><path d="M3 10 L3.6 7.7 L8.3 3 L10 4.7 L5.3 9.4Z" fill="#fff"/></svg>
<svg style="position:absolute;left:1086px;top:423px" width="13" height="15" viewBox="0 0 13 15"><rect x="0.4" y="1.7" width="11.4" height="1.5" rx=".5" fill="#333"/><rect x="4" y="0.8" width="4.2" height="1.4" rx=".6" fill="#333"/><path d="M1.3 3.8 L10.9 3.8 L10.6 13.3 C10.6 13.7 10.3 14 9.9 14 L2.3 14 C1.9 14 1.6 13.7 1.6 13.3Z" fill="#333"/><rect x="3" y="5.3" width="1" height="7" fill="#fff" opacity=".95"/><rect x="5.6" y="5.3" width="1" height="7" fill="#fff" opacity=".95"/><rect x="8.2" y="5.3" width="1" height="7" fill="#fff" opacity=".95"/></svg>
<svg style="position:absolute;left:1113px;top:424px" width="12" height="14" viewBox="0 0 12 14"><path d="M3 13 L3 3" stroke="#333" stroke-width="1.7"/><path d="M0.2 4.4 L3 0.4 L5.8 4.4Z" fill="#333"/><path d="M8.6 0.6 L8.6 10.4" stroke="#333" stroke-width="1.7"/><path d="M5.8 9.2 L8.6 13.1 L11.4 9.2Z" fill="#333"/></svg>
<div style="position:absolute;left:243px;top:461px;width:907px;height:61px;background:#fafafa"></div>
<div style="position:absolute;left:255px;top:484px;width:15px;height:16px;background:#fff;border:1px solid #606060;box-shadow:inset -1px -1px 0 #b0b0b0;box-sizing:border-box"></div>
<div class="t" style="left:300.80px;top:486.50px;font-size:10.4px;line-height:10.4px;letter-spacing:0.000px;color:#333;-webkit-text-stroke:0.2px #333;">5</div>
<svg style="position:absolute;left:325.0px;top:471.75px" width="40" height="40" viewBox="0 0 40 40"><defs><clipPath id="c4"><circle cx="19.8" cy="20" r="18.6"/></clipPath><filter id="bl4" x="-10%" y="-10%" width="120%" height="120%"><feGaussianBlur stdDeviation="0.55"/></filter></defs><g clip-path="url(#c4)"><g filter="url(#bl4)"><rect width="40" height="40" fill="#a9a9a9"/><rect x="0" y="0" width="22" height="14" fill="#c0c0c0"/><path d="M2 8 L12 6 L14 34 L2 32Z" fill="#555"/><ellipse cx="9" cy="26" rx="7" ry="5" fill="none" stroke="#222" stroke-width="2.6"/><path d="M4 12 L10 10 L11 18 L4 19Z" fill="#2a2a2a"/><path d="M12 12 C16 4 26 1 36 8 L38 24 C34 29 26 30 18 24 C14 22 12 18 12 12Z" fill="#e4d2ca"/><path d="M20 10 L36 14 M22 16 L37 19" stroke="#c9b0a8" stroke-width="0.8"/><path d="M22 30 L38 26 L36 36 L24 38Z" fill="#333"/><rect x="24" y="25" width="12" height="3" fill="#bbb"/></g></g></svg>
<div class="t" style="left:376.00px;top:486.67px;font-size:10.2px;line-height:10.2px;letter-spacing:0.472px;color:#3a3a3a;-webkit-text-stroke:0.25px #3a3a3a;">Plumbing Services</div>
<div class="t" style="left:576.00px;top:487.00px;font-size:9.8px;line-height:9.8px;letter-spacing:0.331px;color:#333;-webkit-text-stroke:0.2px #333;">PLUMBING_SERVICES</div>
<svg style="position:absolute;left:755px;top:485.75px" width="12" height="12" viewBox="0 0 12 12"><path d="M2.3 2.2 L9.7 9.6 M9.7 2.2 L2.3 9.6" stroke="#fc3f7b" stroke-width="2.7" stroke-linecap="round"/></svg>
<svg style="position:absolute;left:822.8px;top:486.95px" width="14" height="12" viewBox="0 0 14 12"><path d="M1.6 6 L5 9.2 L11.8 2.4" fill="none" stroke="#4db6ac" stroke-width="2.6" stroke-linecap="round"/></svg>
<svg style="position:absolute;left:894.6px;top:485.75px" width="12" height="12" viewBox="0 0 12 12"><path d="M2.3 2.2 L9.7 9.6 M9.7 2.2 L2.3 9.6" stroke="#fc3f7b" stroke-width="2.7" stroke-linecap="round"/></svg>
<svg style="position:absolute;left:964px;top:485.75px" width="12" height="12" viewBox="0 0 12 12"><path d="M2.3 2.2 L9.7 9.6 M9.7 2.2 L2.3 9.6" stroke="#fc3f7b" stroke-width="2.7" stroke-linecap="round"/></svg>
<svg style="position:absolute;left:1024.3px;top:486px" width="16" height="11" viewBox="0 0 16 11"><path d="M0.3 5.3 C2.4 1.6 5 0.3 7.6 0.3 C10.2 0.3 12.8 1.6 14.9 5.3 C12.8 9 10.2 10.3 7.6 10.3 C5 10.3 2.4 9 0.3 5.3Z" fill="#333"/><circle cx="7.6" cy="5.3" r="3.4" fill="#fff"/><circle cx="7.6" cy="5.3" r="2.4" fill="#333"/><circle cx="6.7" cy="4.4" r=".9" fill="#fff"/></svg>
<svg style="position:absolute;left:1057px;top:485px" width="14" height="14" viewBox="0 0 14 14"><rect x="0.4" y="0.3" width="12.6" height="12.4" rx="1.5" fill="#333"/><path d="M3 10 L3.6 7.7 L8.3 3 L10 4.7 L5.3 9.4Z" fill="#fff"/></svg>
<svg style="position:absolute;left:1086px;top:484px" width="13" height="15" viewBox="0 0 13 15"><rect x="0.4" y="1.7" width="11.4" height="1.5" rx=".5" fill="#333"/><rect x="4" y="0.8" width="4.2" height="1.4" rx=".6" fill="#333"/><path d="M1.3 3.8 L10.9 3.8 L10.6 13.3 C10.6 13.7 10.3 14 9.9 14 L2.3 14 C1.9 14 1.6 13.7 1.6 13.3Z" fill="#333"/><rect x="3" y="5.3" width="1" height="7" fill="#fff" opacity=".95"/><rect x="5.6" y="5.3" width="1" height="7" fill="#fff" opacity=".95"/><rect x="8.2" y="5.3" width="1" height="7" fill="#fff" opacity=".95"/></svg>
<svg style="position:absolute;left:1113px;top:485px" width="12" height="14" viewBox="0 0 12 14"><path d="M3 13 L3 3" stroke="#333" stroke-width="1.7"/><path d="M0.2 4.4 L3 0.4 L5.8 4.4Z" fill="#333"/><path d="M8.6 0.6 L8.6 10.4" stroke="#333" stroke-width="1.7"/><path d="M5.8 9.2 L8.6 13.1 L11.4 9.2Z" fill="#333"/></svg>
<div style="position:absolute;left:255px;top:546px;width:15px;height:16px;background:#fff;border:1px solid #606060;box-shadow:inset -1px -1px 0 #b0b0b0;box-sizing:border-box"></div>
<div class="t" style="left:300.80px;top:548.50px;font-size:10.4px;line-height:10.4px;letter-spacing:0.000px;color:#333;-webkit-text-stroke:0.2px #333;">6</div>
<svg style="position:absolute;left:325.0px;top:533.25px" width="40" height="40" viewBox="0 0 40 40"><defs><clipPath id="c5"><circle cx="19.8" cy="20" r="18.6"/></clipPath><filter id="bl5" x="-10%" y="-10%" width="120%" height="120%"><feGaussianBlur stdDeviation="0.55"/></filter></defs><g clip-path="url(#c5)"><g filter="url(#bl5)"><rect width="40" height="40" fill="#e6e5e3"/><rect x="0" y="0" width="40" height="12" fill="#e8edf2"/><rect x="9" y="1" width="6" height="11" fill="#78a0d2"/><rect x="23" y="3" width="15" height="9" fill="#8cb07e"/><rect x="1.5" y="17" width="4" height="8.1" fill="#5a68a8"/><rect x="2.2" y="25.1" width="2.6" height="7.9" fill="#2a2d34"/><circle cx="3.5" cy="15.9" r="1.2" fill="#a26b55"/><rect x="13" y="13" width="3.6" height="7.7" fill="#5a68a8"/><rect x="13.7" y="20.6" width="2.2" height="7.3" fill="#2a2d34"/><circle cx="14.8" cy="11.9" r="1.1" fill="#a26b55"/><rect x="17.2" y="13" width="3.6" height="7.4" fill="#5a68a8"/><rect x="17.9" y="20.4" width="2.2" height="7.1" fill="#2a2d34"/><circle cx="19.0" cy="11.9" r="1.1" fill="#a26b55"/><rect x="21.4" y="12.5" width="3.4" height="7.2" fill="#5a68a8"/><rect x="22.099999999999998" y="19.7" width="2.0" height="6.8" fill="#2a2d34"/><circle cx="23.099999999999998" cy="11.4" r="1.0" fill="#a26b55"/><rect x="25.6" y="12.5" width="3.4" height="7.0" fill="#5a68a8"/><rect x="26.3" y="19.5" width="2.0" height="6.5" fill="#2a2d34"/><circle cx="27.3" cy="11.4" r="1.0" fill="#a26b55"/><rect x="29.8" y="12.5" width="3.4" height="6.8" fill="#5a68a8"/><rect x="30.5" y="19.2" width="2.0" height="6.2" fill="#2a2d34"/><circle cx="31.5" cy="11.4" r="1.0" fill="#a26b55"/><rect x="6.5" y="8" width="5" height="12.0" fill="#5a68a8"/><rect x="7.2" y="20.0" width="3.6" height="16.0" fill="#2a2d34"/><circle cx="9.0" cy="6.9" r="1.5" fill="#a26b55"/><circle cx="9" cy="6.5" r="1.9" fill="#9a3030"/><rect x="32" y="25" width="2.6" height="6" fill="#d8402c"/></g></g></svg>
<div class="t" style="left:376.00px;top:548.67px;font-size:10.2px;line-height:10.2px;letter-spacing:0.369px;color:#3a3a3a;-webkit-text-stroke:0.25px #3a3a3a;">Security Services</div>
<div class="t" style="left:576.00px;top:549.00px;font-size:9.8px;line-height:9.8px;letter-spacing:0.100px;color:#333;-webkit-text-stroke:0.2px #333;">SECURITY_SERVICES</div>
<svg style="position:absolute;left:755px;top:547.25px" width="12" height="12" viewBox="0 0 12 12"><path d="M2.3 2.2 L9.7 9.6 M9.7 2.2 L2.3 9.6" stroke="#fc3f7b" stroke-width="2.7" stroke-linecap="round"/></svg>
<svg style="position:absolute;left:822.8px;top:548.45px" width="14" height="12" viewBox="0 0 14 12"><path d="M1.6 6 L5 9.2 L11.8 2.4" fill="none" stroke="#4db6ac" stroke-width="2.6" stroke-linecap="round"/></svg>
<svg style="position:absolute;left:894.6px;top:547.25px" width="12" height="12" viewBox="0 0 12 12"><path d="M2.3 2.2 L9.7 9.6 M9.7 2.2 L2.3 9.6" stroke="#fc3f7b" stroke-width="2.7" stroke-linecap="round"/></svg>
<svg style="position:absolute;left:964px;top:547.25px" width="12" height="12" viewBox="0 0 12 12"><path d="M2.3 2.2 L9.7 9.6 M9.7 2.2 L2.3 9.6" stroke="#fc3f7b" stroke-width="2.7" stroke-linecap="round"/></svg>
<svg style="position:absolute;left:1024.3px;top:548px" width="16" height="11" viewBox="0 0 16 11"><path d="M0.3 5.3 C2.4 1.6 5 0.3 7.6 0.3 C10.2 0.3 12.8 1.6 14.9 5.3 C12.8 9 10.2 10.3 7.6 10.3 C5 10.3 2.4 9 0.3 5.3Z" fill="#333"/><circle cx="7.6" cy="5.3" r="3.4" fill="#fff"/><circle cx="7.6" cy="5.3" r="2.4" fill="#333"/><circle cx="6.7" cy="4.4" r=".9" fill="#fff"/></svg>
<svg style="position:absolute;left:1057px;top:547px" width="14" height="14" viewBox="0 0 14 14"><rect x="0.4" y="0.3" width="12.6" height="12.4" rx="1.5" fill="#333"/><path d="M3 10 L3.6 7.7 L8.3 3 L10 4.7 L5.3 9.4Z" fill="#fff"/></svg>
<svg style="position:absolute;left:1086px;top:546px" width="13" height="15" viewBox="0 0 13 15"><rect x="0.4" y="1.7" width="11.4" height="1.5" rx=".5" fill="#333"/><rect x="4" y="0.8" width="4.2" height="1.4" rx=".6" fill="#333"/><path d="M1.3 3.8 L10.9 3.8 L10.6 13.3 C10.6 13.7 10.3 14 9.9 14 L2.3 14 C1.9 14 1.6 13.7 1.6 13.3Z" fill="#333"/><rect x="3" y="5.3" width="1" height="7" fill="#fff" opacity=".95"/><rect x="5.6" y="5.3" width="1" height="7" fill="#fff" opacity=".95"/><rect x="8.2" y="5.3" width="1" height="7" fill="#fff" opacity=".95"/></svg>
<svg style="position:absolute;left:1113px;top:547px" width="12" height="14" viewBox="0 0 12 14"><path d="M3 13 L3 3" stroke="#333" stroke-width="1.7"/><path d="M0.2 4.4 L3 0.4 L5.8 4.4Z" fill="#333"/><path d="M8.6 0.6 L8.6 10.4" stroke="#333" stroke-width="1.7"/><path d="M5.8 9.2 L8.6 13.1 L11.4 9.2Z" fill="#333"/></svg>
<div style="position:absolute;left:243px;top:584px;width:907px;height:62px;background:#fafafa"></div>
<div style="position:absolute;left:255px;top:607px;width:15px;height:16px;background:#fff;border:1px solid #606060;box-shadow:inset -1px -1px 0 #b0b0b0;box-sizing:border-box"></div>
<div class="t" style="left:300.80px;top:609.50px;font-size:10.4px;line-height:10.4px;letter-spacing:0.000px;color:#333;-webkit-text-stroke:0.2px #333;">7</div>
<svg style="position:absolute;left:325.0px;top:594.75px" width="40" height="40" viewBox="0 0 40 40"><defs><clipPath id="c6"><circle cx="19.8" cy="20" r="18.6"/></clipPath><filter id="bl6" x="-10%" y="-10%" width="120%" height="120%"><feGaussianBlur stdDeviation="0.55"/></filter></defs><g clip-path="url(#c6)"><g filter="url(#bl6)"><rect width="40" height="40" fill="#e8ecef"/><rect x="16" y="0" width="24" height="14" fill="#d5dee4"/><path d="M18 12 L40 9 L40 26 L22 24Z" fill="#f4f4f4"/><path d="M10 4 L18 1.5 L18 5.5 L12 7.5Z" fill="#f4cc20"/><path d="M1 17 L8 6 L9 9 L3 19Z" fill="#222"/><path d="M5 8 L10 6 L15.5 21 L11 23Z" fill="#f0c020"/><path d="M8 10 L11 9 L13 17 L10 18Z" fill="#3a4250"/><ellipse cx="21" cy="19" rx="8" ry="5.5" fill="#d4ab9a"/><rect x="0" y="26" width="40" height="14" fill="#6a6e72"/><rect x="1" y="23" width="16" height="4" fill="#f06a30"/><rect x="6" y="24" width="3" height="8" fill="#d02020"/><rect x="19" y="26" width="5" height="8" fill="#3aa6b8"/><rect x="26" y="22" width="8" height="8" fill="#f4c020"/><rect x="12" y="28" width="4" height="9" fill="#e6e6e6"/><rect x="28" y="30" width="6" height="6" fill="#dcdcdc"/><rect x="0" y="34" width="40" height="6" fill="#30343a"/><path d="M2 14 Q6 22 8 28" stroke="#d86a8c" stroke-width="0.8" fill="none"/><path d="M30 20 Q34 12 39 14" stroke="#f0c060" stroke-width="0.8" fill="none"/></g></g></svg>
<div class="t" style="left:376.00px;top:609.67px;font-size:10.2px;line-height:10.2px;letter-spacing:0.459px;color:#3a3a3a;-webkit-text-stroke:0.25px #3a3a3a;">Appliance &amp; Electronic Repair</div>
<div class="t" style="left:576.00px;top:610.00px;font-size:9.8px;line-height:9.8px;letter-spacing:0.334px;color:#333;-webkit-text-stroke:0.2px #333;">ELECTRONIC_REPAIR</div>
<svg style="position:absolute;left:755px;top:608.75px" width="12" height="12" viewBox="0 0 12 12"><path d="M2.3 2.2 L9.7 9.6 M9.7 2.2 L2.3 9.6" stroke="#fc3f7b" stroke-width="2.7" stroke-linecap="round"/></svg>
<svg style="position:absolute;left:823px;top:608.75px" width="12" height="12" viewBox="0 0 12 12"><path d="M2.3 2.2 L9.7 9.6 M9.7 2.2 L2.3 9.6" stroke="#fc3f7b" stroke-width="2.7" stroke-linecap="round"/></svg>
<svg style="position:absolute;left:894.4px;top:609.95px" width="14" height="12" viewBox="0 0 14 12"><path d="M1.6 6 L5 9.2 L11.8 2.4" fill="none" stroke="#4db6ac" stroke-width="2.6" stroke-linecap="round"/></svg>
<svg style="position:absolute;left:1024.3px;top:609px" width="16" height="11" viewBox="0 0 16 11"><path d="M0.3 5.3 C2.4 1.6 5 0.3 7.6 0.3 C10.2 0.3 12.8 1.6 14.9 5.3 C12.8 9 10.2 10.3 7.6 10.3 C5 10.3 2.4 9 0.3 5.3Z" fill="#333"/><circle cx="7.6" cy="5.3" r="3.4" fill="#fff"/><circle cx="7.6" cy="5.3" r="2.4" fill="#333"/><circle cx="6.7" cy="4.4" r=".9" fill="#fff"/></svg>
<svg style="position:absolute;left:1057px;top:608px" width="14" height="14" viewBox="0 0 14 14"><rect x="0.4" y="0.3" width="12.6" height="12.4" rx="1.5" fill="#333"/><path d="M3 10 L3.6 7.7 L8.3 3 L10 4.7 L5.3 9.4Z" fill="#fff"/></svg>
<svg style="position:absolute;left:1086px;top:607px" width="13" height="15" viewBox="0 0 13 15"><rect x="0.4" y="1.7" width="11.4" height="1.5" rx=".5" fill="#333"/><rect x="4" y="0.8" width="4.2" height="1.4" rx=".6" fill="#333"/><path d="M1.3 3.8 L10.9 3.8 L10.6 13.3 C10.6 13.7 10.3 14 9.9 14 L2.3 14 C1.9 14 1.6 13.7 1.6 13.3Z" fill="#333"/><rect x="3" y="5.3" width="1" height="7" fill="#fff" opacity=".95"/><rect x="5.6" y="5.3" width="1" height="7" fill="#fff" opacity=".95"/><rect x="8.2" y="5.3" width="1" height="7" fill="#fff" opacity=".95"/></svg>
<svg style="position:absolute;left:1113px;top:608px" width="12" height="14" viewBox="0 0 12 14"><path d="M3 13 L3 3" stroke="#333" stroke-width="1.7"/><path d="M0.2 4.4 L3 0.4 L5.8 4.4Z" fill="#333"/><path d="M8.6 0.6 L8.6 10.4" stroke="#333" stroke-width="1.7"/><path d="M5.8 9.2 L8.6 13.1 L11.4 9.2Z" fill="#333"/></svg>
</body></html>
